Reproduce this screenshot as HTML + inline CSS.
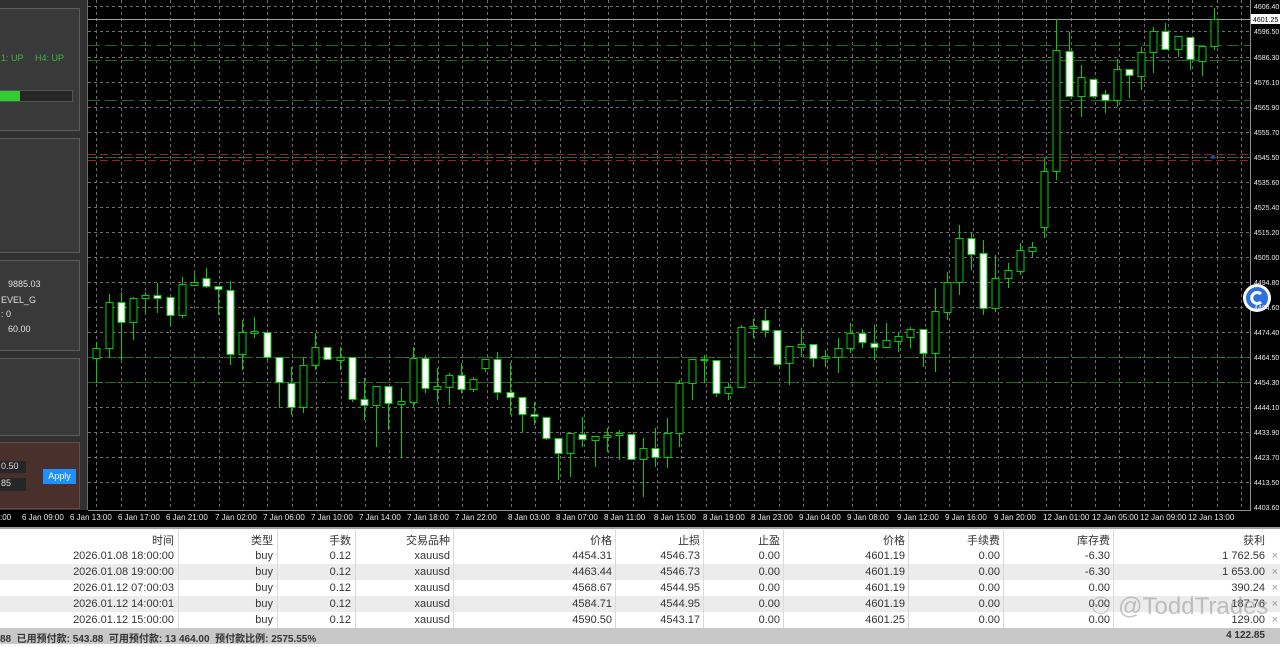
<!DOCTYPE html>
<html><head><meta charset="utf-8"><style>
*{margin:0;padding:0;box-sizing:border-box}
body{width:1280px;height:647px;overflow:hidden;background:#fff;position:relative;font-family:"Liberation Sans","Noto Sans CJK SC",sans-serif}
.chart{position:absolute;left:0;top:0;width:1280px;height:527px;background:#000}
.lp{position:absolute;left:0;top:0;width:88px;height:510px;background:#303030;border-right:1px solid #6a6a6a}
.box{position:absolute;left:-2px;width:82px;background:#393939;border:1px solid #5c5c5c}
.lt{position:absolute;color:#e0e0e0;font-size:9px;white-space:nowrap}
.tbl{position:absolute;left:0;top:527px;width:1280px;height:120px;background:#fff;border-top:2px solid #a0a0a0}
.row{position:absolute;left:0;width:1280px;height:16px;font-size:11px;color:#333}
.row span{position:absolute;top:2px;white-space:nowrap;text-align:right}
.sep{position:absolute;top:530px;width:1px;height:98px;background:#dadada}
</style></head><body>
<div class="chart">
<svg width="1280" height="527" style="position:absolute;left:0;top:0">
<g stroke="#6e6e6e" stroke-dasharray="3,3" stroke-width="1">
<path d="M88 6.5H1250M88 31.5H1250M88 57.5H1250M88 82.5H1250M88 107.5H1250M88 132.5H1250M88 157.5H1250M88 182.5H1250M88 207.5H1250M88 232.5H1250M88 257.5H1250M88 282.5H1250M88 307.5H1250M88 332.5H1250M88 357.5H1250M88 382.5H1250M88 407.5H1250M88 432.5H1250M88 457.5H1250M88 482.5H1250"/>
<path d="M96.5 0V510M121.5 0V510M145.5 0V510M170.5 0V510M194.5 0V510M219.5 0V510M243.5 0V510M267.5 0V510M292.5 0V510M316.5 0V510M341.5 0V510M365.5 0V510M389.5 0V510M414.5 0V510M438.5 0V510M462.5 0V510M487.5 0V510M511.5 0V510M535.5 0V510M560.5 0V510M584.5 0V510M608.5 0V510M633.5 0V510M657.5 0V510M681.5 0V510M706.5 0V510M730.5 0V510M754.5 0V510M779.5 0V510M803.5 0V510M827.5 0V510M852.5 0V510M876.5 0V510M900.5 0V510M925.5 0V510M949.5 0V510M973.5 0V510M998.5 0V510M1022.5 0V510M1046.5 0V510M1071.5 0V510M1095.5 0V510M1119.5 0V510M1144.5 0V510M1168.5 0V510M1192.5 0V510M1217.5 0V510M1241.5 0V510"/>
</g>
<path d="M88 19.5H1250" stroke="#a0a0a0"/>
<g stroke="#1f6a1f" stroke-dasharray="12,5">
<path d="M88 45.5H1250M88 60.5H1250M88 100.5H1250M88 157.5H1250M88 357.5H1250M88 382.5H1250"/>
</g>
<g stroke="#a01c2a" stroke-dasharray="8,4">
<path d="M88 154.5H1250M88 160.5H1250"/>
</g>
<path d="M88 510.5H1250M1250.5 0V511" stroke="#909090"/>
<g stroke="#00d000" stroke-width="1">
<path d="M96.5 342V383M109.5 294V358M121.5 292V360M133.5 297V340M145.5 292V313M157.5 283V313M170.5 297V325M182.5 277V318M194.5 273V285M206.5 268V288M218.5 286V315M230.5 281V365M242.5 320V370M254.5 317V338M267.5 332V360M279.5 357V408M291.5 367V415M303.5 357V413M315.5 333V370M327.5 347V360M340.5 347V370M352.5 357V402M364.5 378V420M376.5 386V447M388.5 386V430M401.5 388V458M413.5 347V407M425.5 355V393M437.5 368V402M449.5 373V405M461.5 363V393M473.5 377V392M485.5 359V372M497.5 352V400M510.5 363V415M522.5 397V432M534.5 402V425M546.5 417V440M558.5 438V480M570.5 433V477M582.5 417V447M595.5 436V467M607.5 428V452M619.5 430V460M631.5 434V460M643.5 438V497M655.5 428V467M667.5 418V468M679.5 380V447M692.5 359V400M704.5 355V383M716.5 360V397M728.5 383V400M741.5 325V388M753.5 319V338M765.5 309V337M777.5 330V366M789.5 346V385M801.5 328V357M813.5 344V367M825.5 350V367M838.5 338V373M850.5 323V353M862.5 329V348M874.5 325V360M886.5 323V348M898.5 332V352M910.5 327V348M923.5 329V367M935.5 288V372M947.5 272V320M959.5 225V295M971.5 233V270M983.5 240V315M995.5 255V312M1008.5 263V288M1020.5 243V275M1032.5 242V257M1044.5 158V238M1056.5 19V180M1069.5 32V97M1081.5 65V117M1093.5 79V98M1105.5 90V113M1117.5 59V107M1129.5 69V98M1141.5 47V90M1153.5 27V73M1165.5 23V49M1178.5 36V57M1190.5 37V70M1202.5 46V76M1214.5 8V50"/>
</g>
<g fill="#000" stroke="#00d000">
<rect x="93" y="348.5" width="7" height="10"/><rect x="106" y="302.5" width="7" height="46"/><rect x="130" y="298.5" width="7" height="24"/><rect x="142" y="295.5" width="7" height="3"/><rect x="179" y="284.5" width="7" height="31"/><rect x="191" y="282.5" width="7" height="3"/><rect x="239" y="332.5" width="7" height="22"/><rect x="251" y="331.5" width="7" height="2"/><rect x="300" y="365.5" width="7" height="42"/><rect x="312" y="347.5" width="7" height="18"/><rect x="337" y="357.5" width="7" height="3"/><rect x="373" y="386.5" width="7" height="19"/><rect x="398" y="401.5" width="7" height="3"/><rect x="410" y="358.5" width="7" height="44"/><rect x="434" y="386.5" width="7" height="3"/><rect x="446" y="375.5" width="7" height="12"/><rect x="470" y="379.5" width="7" height="10"/><rect x="482" y="359.5" width="7" height="9"/><rect x="567" y="433.5" width="7" height="20"/><rect x="592" y="436.5" width="7" height="4"/><rect x="604" y="435.5" width="7" height="2"/><rect x="616" y="433.5" width="7" height="2"/><rect x="640" y="448.5" width="7" height="11"/><rect x="664" y="433.5" width="7" height="24"/><rect x="676" y="383.5" width="7" height="50"/><rect x="689" y="359.5" width="7" height="24"/><rect x="701" y="359.5" width="7" height="1"/><rect x="725" y="387.5" width="7" height="6"/><rect x="738" y="327.5" width="7" height="60"/><rect x="750" y="326.5" width="7" height="2"/><rect x="786" y="346.5" width="7" height="17"/><rect x="798" y="344.5" width="7" height="3"/><rect x="822" y="356.5" width="7" height="2"/><rect x="835" y="348.5" width="7" height="9"/><rect x="847" y="333.5" width="7" height="15"/><rect x="883" y="340.5" width="7" height="7"/><rect x="895" y="336.5" width="7" height="5"/><rect x="907" y="329.5" width="7" height="8"/><rect x="932" y="311.5" width="7" height="42"/><rect x="944" y="282.5" width="7" height="30"/><rect x="956" y="238.5" width="7" height="44"/><rect x="992" y="278.5" width="7" height="30"/><rect x="1005" y="270.5" width="7" height="8"/><rect x="1017" y="250.5" width="7" height="21"/><rect x="1029" y="247.5" width="7" height="4"/><rect x="1041" y="171.5" width="7" height="56"/><rect x="1053" y="50.5" width="7" height="121"/><rect x="1078" y="77.5" width="7" height="19"/><rect x="1114" y="69.5" width="7" height="31"/><rect x="1138" y="52.5" width="7" height="24"/><rect x="1150" y="31.5" width="7" height="21"/><rect x="1175" y="36.5" width="7" height="13"/><rect x="1199" y="46.5" width="7" height="15"/><rect x="1211" y="19.5" width="7" height="27"/>
</g>
<g fill="#fff" stroke="#00d000">
<rect x="118" y="302.5" width="7" height="20"/><rect x="154" y="295.5" width="7" height="3"/><rect x="167" y="297.5" width="7" height="18"/><rect x="203" y="278.5" width="7" height="8"/><rect x="215" y="286.5" width="7" height="3"/><rect x="227" y="290.5" width="7" height="64"/><rect x="264" y="332.5" width="7" height="25"/><rect x="276" y="357.5" width="7" height="25"/><rect x="288" y="383.5" width="7" height="24"/><rect x="324" y="347.5" width="7" height="12"/><rect x="349" y="357.5" width="7" height="42"/><rect x="361" y="399.5" width="7" height="6"/><rect x="385" y="386.5" width="7" height="17"/><rect x="422" y="358.5" width="7" height="30"/><rect x="458" y="375.5" width="7" height="14"/><rect x="494" y="359.5" width="7" height="33"/><rect x="507" y="392.5" width="7" height="5"/><rect x="519" y="397.5" width="7" height="17"/><rect x="531" y="414.5" width="7" height="2"/><rect x="543" y="417.5" width="7" height="21"/><rect x="555" y="438.5" width="7" height="15"/><rect x="579" y="434.5" width="7" height="5"/><rect x="628" y="434.5" width="7" height="25"/><rect x="652" y="448.5" width="7" height="9"/><rect x="713" y="360.5" width="7" height="33"/><rect x="762" y="320.5" width="7" height="10"/><rect x="774" y="330.5" width="7" height="34"/><rect x="810" y="344.5" width="7" height="14"/><rect x="859" y="333.5" width="7" height="9"/><rect x="871" y="343.5" width="7" height="4"/><rect x="920" y="329.5" width="7" height="24"/><rect x="968" y="238.5" width="7" height="16"/><rect x="980" y="253.5" width="7" height="55"/><rect x="1066" y="51.5" width="7" height="45"/><rect x="1090" y="79.5" width="7" height="17"/><rect x="1102" y="94.5" width="7" height="6"/><rect x="1126" y="69.5" width="7" height="6"/><rect x="1162" y="31.5" width="7" height="18"/><rect x="1187" y="37.5" width="7" height="22"/>
</g>
<circle cx="1213" cy="157" r="2" fill="#2040c0"/>
<circle cx="1257" cy="298" r="14" fill="#fff"/>
<circle cx="1257" cy="298" r="11" fill="#2f6fe0"/>
<path d="M1261 294a5.5 5.5 0 1 0 0 8" stroke="#fff" stroke-width="3" fill="none"/>
<g fill="#e8e8e8" font-size="7" font-family="Liberation Sans,sans-serif">
<text x="1254" y="9">4606.40</text><text x="1254" y="34">4596.50</text><text x="1254" y="60">4586.30</text><text x="1254" y="85">4576.10</text><text x="1254" y="110">4565.90</text><text x="1254" y="135">4555.70</text><text x="1254" y="160">4545.50</text><text x="1254" y="185">4535.60</text><text x="1254" y="210">4525.40</text><text x="1254" y="235">4515.20</text><text x="1254" y="260">4505.00</text><text x="1254" y="285">4494.80</text><text x="1254" y="310">4484.60</text><text x="1254" y="335">4474.40</text><text x="1254" y="360">4464.50</text><text x="1254" y="385">4454.30</text><text x="1254" y="410">4444.10</text><text x="1254" y="435">4433.90</text><text x="1254" y="460">4423.70</text><text x="1254" y="485">4413.50</text><text x="1254" y="510">4403.60</text>
</g>
<rect x="1251" y="14" width="29" height="10" fill="#fff"/>
<text x="1253" y="22" font-size="7" fill="#000" font-family="Liberation Sans,sans-serif">4601.25</text>
<g fill="#e8e8e8" font-size="8" font-family="Liberation Sans,sans-serif">
<text x="0" y="520">:00</text><text x="22" y="520">6 Jan 09:00</text><text x="70" y="520">6 Jan 13:00</text><text x="118" y="520">6 Jan 17:00</text><text x="166" y="520">6 Jan 21:00</text><text x="215" y="520">7 Jan 02:00</text><text x="263" y="520">7 Jan 06:00</text><text x="311" y="520">7 Jan 10:00</text><text x="359" y="520">7 Jan 14:00</text><text x="407" y="520">7 Jan 18:00</text><text x="455" y="520">7 Jan 22:00</text><text x="508" y="520">8 Jan 03:00</text><text x="556" y="520">8 Jan 07:00</text><text x="604" y="520">8 Jan 11:00</text><text x="654" y="520">8 Jan 15:00</text><text x="703" y="520">8 Jan 19:00</text><text x="751" y="520">8 Jan 23:00</text><text x="799" y="520">9 Jan 04:00</text><text x="847" y="520">9 Jan 08:00</text><text x="897" y="520">9 Jan 12:00</text><text x="945" y="520">9 Jan 16:00</text><text x="994" y="520">9 Jan 20:00</text><text x="1043" y="520">12 Jan 01:00</text><text x="1092" y="520">12 Jan 05:00</text><text x="1140" y="520">12 Jan 09:00</text><text x="1188" y="520">12 Jan 13:00</text>
</g>
</svg>
<div class="lp">
<div class="box" style="top:8px;height:123px">
<div class="lt" style="left:2px;top:44px;color:#3cb43c">1: UP</div>
<div class="lt" style="left:36px;top:44px;color:#3cb43c">H4: UP</div>
<div style="position:absolute;left:0;top:81px;width:74px;height:12px;background:#262626;border:1px solid #555"><div style="width:20px;height:10px;background:#33cc33"></div></div>
</div>
<div class="box" style="top:138px;height:115px"></div>
<div class="box" style="top:260px;height:91px">
<div class="lt" style="left:9px;top:18px">9885.03</div>
<div class="lt" style="left:2px;top:34px">EVEL_G</div>
<div class="lt" style="left:2px;top:48px">:  0</div>
<div class="lt" style="left:9px;top:63px">60.00</div>
</div>
<div class="box" style="top:358px;height:78px"></div>
<div class="box" style="top:442px;height:67px;background:#4a302c;border-color:#6a4a44">
<div style="position:absolute;left:0;top:18px;width:27px;height:12px;background:#262626;color:#ddd;font-size:9px;padding-left:2px">0.50</div>
<div style="position:absolute;left:0;top:35px;width:27px;height:13px;background:#262626;color:#ddd;font-size:9px;padding-left:2px">85</div>
<div style="position:absolute;left:44px;top:26px;width:33px;height:15px;background:#1e8fff;color:#fff;font-size:9px;text-align:center;line-height:15px">Apply</div>
</div>
</div>
</div>
<div class="tbl"></div>
<div class="row" style="top:530px;background:#fff"><span style="right:1106px">时间</span><span style="right:1007px">类型</span><span style="right:929px">手数</span><span style="right:830px">交易品种</span><span style="right:668px">价格</span><span style="right:580px">止损</span><span style="right:500px">止盈</span><span style="right:375px">价格</span><span style="right:280px">手续费</span><span style="right:170px">库存费</span><span style="right:15px">获利</span></div>
<div class="row" style="top:548px;background:#fff"><span style="right:1106px">2026.01.08 18:00:00</span><span style="right:1007px">buy</span><span style="right:929px">0.12</span><span style="right:830px">xauusd</span><span style="right:668px">4454.31</span><span style="right:580px">4546.73</span><span style="right:500px">0.00</span><span style="right:375px">4601.19</span><span style="right:280px">0.00</span><span style="right:170px">-6.30</span><span style="right:15px">1 762.56</span><span style="right:2px;color:#999">×</span></div>
<div class="row" style="top:564px;background:#ececec"><span style="right:1106px">2026.01.08 19:00:00</span><span style="right:1007px">buy</span><span style="right:929px">0.12</span><span style="right:830px">xauusd</span><span style="right:668px">4463.44</span><span style="right:580px">4546.73</span><span style="right:500px">0.00</span><span style="right:375px">4601.19</span><span style="right:280px">0.00</span><span style="right:170px">-6.30</span><span style="right:15px">1 653.00</span><span style="right:2px;color:#999">×</span></div>
<div class="row" style="top:580px;background:#fff"><span style="right:1106px">2026.01.12 07:00:03</span><span style="right:1007px">buy</span><span style="right:929px">0.12</span><span style="right:830px">xauusd</span><span style="right:668px">4568.67</span><span style="right:580px">4544.95</span><span style="right:500px">0.00</span><span style="right:375px">4601.19</span><span style="right:280px">0.00</span><span style="right:170px">0.00</span><span style="right:15px">390.24</span><span style="right:2px;color:#999">×</span></div>
<div class="row" style="top:596px;background:#ececec"><span style="right:1106px">2026.01.12 14:00:01</span><span style="right:1007px">buy</span><span style="right:929px">0.12</span><span style="right:830px">xauusd</span><span style="right:668px">4584.71</span><span style="right:580px">4544.95</span><span style="right:500px">0.00</span><span style="right:375px">4601.19</span><span style="right:280px">0.00</span><span style="right:170px">0.00</span><span style="right:15px">187.76</span><span style="right:2px;color:#999">×</span></div>
<div class="row" style="top:612px;background:#fff"><span style="right:1106px">2026.01.12 15:00:00</span><span style="right:1007px">buy</span><span style="right:929px">0.12</span><span style="right:830px">xauusd</span><span style="right:668px">4590.50</span><span style="right:580px">4543.17</span><span style="right:500px">0.00</span><span style="right:375px">4601.25</span><span style="right:280px">0.00</span><span style="right:170px">0.00</span><span style="right:15px">129.00</span><span style="right:2px;color:#999">×</span></div>
<div class="sep" style="left:178px"></div><div class="sep" style="left:277px"></div><div class="sep" style="left:355px"></div><div class="sep" style="left:453px"></div><div class="sep" style="left:615px"></div><div class="sep" style="left:703px"></div><div class="sep" style="left:783px"></div><div class="sep" style="left:908px"></div><div class="sep" style="left:1003px"></div><div class="sep" style="left:1113px"></div>
<div class="row" style="top:628px;height:16px;background:#c8c8c8;font-weight:bold;font-size:10px"><span style="left:0;text-align:left">88 &nbsp;已用预付款: 543.88 &nbsp;可用预付款: 13 464.00 &nbsp;预付款比例: 2575.55%</span><span style="right:15px">4 122.85</span></div>
<div style="position:absolute;left:1090px;top:592px;font-size:24px;color:rgba(150,150,150,0.55);white-space:nowrap;font-family:'Liberation Sans',sans-serif">⚇ @ToddTrades</div>
</body></html>
